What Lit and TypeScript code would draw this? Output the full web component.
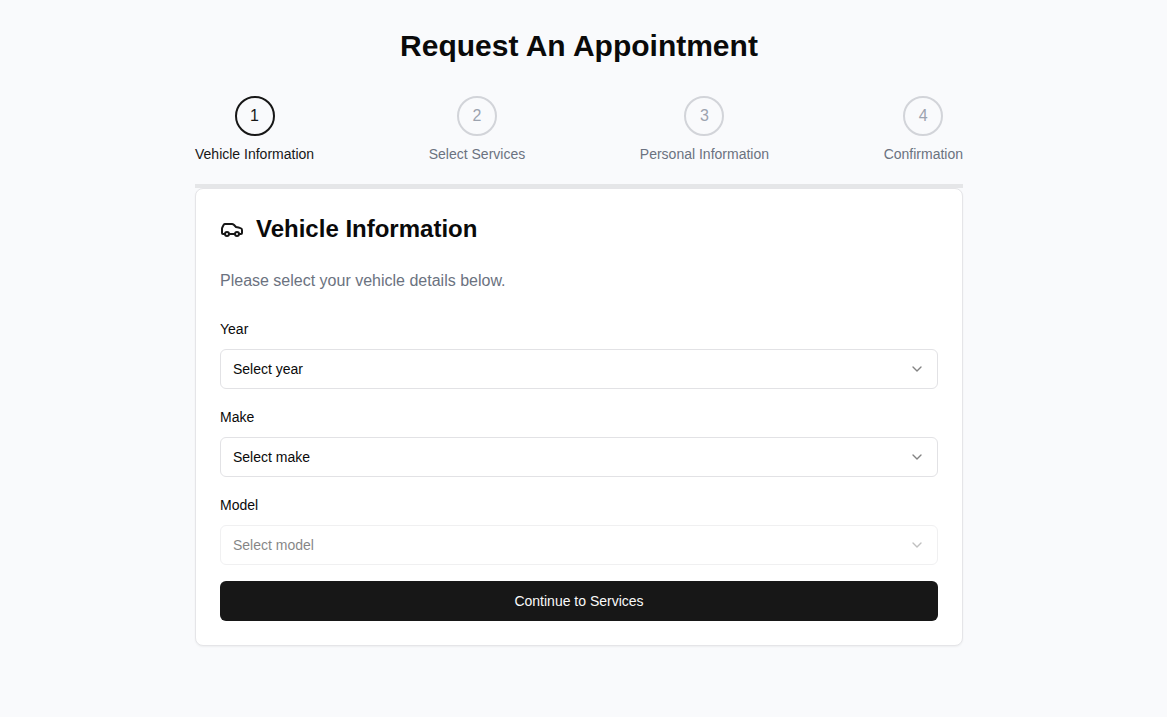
import { LitElement, html, css, svg } from "lit";
import { customElement, property, state } from "lit/decorators.js";
import { classMap } from "lit/directives/class-map.js";

const carIcon = html`<svg class="car" viewBox="0 0 24 24" aria-hidden="true">${svg`
  <path d="M19 17h2c.6 0 1-.4 1-1v-3c0-.9-.7-1.7-1.5-1.9C18.7 10.6 16 10 16 10s-1.3-1.4-2.2-2.3c-.5-.4-1.1-.7-1.8-.7H5c-.6 0-1.1.4-1.4.9l-1.4 2.9A3.7 3.7 0 0 0 2 12v4c0 .6.4 1 1 1h2"/>
  <circle cx="7" cy="17" r="2"/>
  <path d="M9 17h6"/>
  <circle cx="17" cy="17" r="2"/>`}</svg>`;

@customElement("select-field")
export class SelectField extends LitElement {
  @property() label = "";
  @property() placeholder = "";
  @property({ type: Array }) options: string[] = [];
  @property({ type: Boolean }) disabled = false;

  static styles = css`
    :host { display: block; }
    label {
      display: block;
      margin-bottom: 8px;
      font-size: 14px;
      line-height: 24px;
    }
    .control { display: grid; align-items: center; }
    .control > * { grid-area: 1 / 1; }
    .disabled { opacity: 0.5; }
    select {
      appearance: none;
      width: 100%;
      height: 40px;
      margin: 0;
      padding: 0 40px 0 12px;
      border: 1px solid #e2e2e5;
      border-radius: 6px;
      background: #fff;
      color: #0a0a0a;
      font: inherit;
      font-size: 14px;
      line-height: 20px;
      opacity: 1;
    }
    .chevron {
      justify-self: end;
      width: 16px;
      height: 16px;
      margin-right: 13px;
      fill: none;
      stroke: currentColor;
      stroke-width: 2;
      stroke-linecap: round;
      stroke-linejoin: round;
      opacity: 0.5;
      pointer-events: none;
    }
  `;

  render() {
    return html`
      <label for="field">${this.label}</label>
      <div class=${classMap({ control: true, disabled: this.disabled })}>
        <select id="field" ?disabled=${this.disabled}>
          <option value="">${this.placeholder}</option>
          ${this.options.map((o) => html`<option>${o}</option>`)}
        </select>
        <svg class="chevron" viewBox="0 0 24 24" aria-hidden="true"><path d="m6 9 6 6 6-6" /></svg>
      </div>
    `;
  }
}

@customElement("app-root")
export class AppRoot extends LitElement {
  @state() private current = 0;

  private steps = ["Vehicle Information", "Select Services", "Personal Information", "Confirmation"];

  static styles = css`
    :host {
      display: block;
      box-sizing: border-box;
      min-height: 100vh;
      padding: 28px 9px 28px 0;
      background: #f9fafb;
      background: #f9fafc;
      color: #0a0a0a;
      font-family: "Liberation Sans", Arial, sans-serif;
      font-size: 16px;
      line-height: 24px;
    }
    main { max-width: 768px; margin: 0 auto; }
    h1, h2, p, ol { margin: 0; padding: 0; }
    h1 {
      margin-bottom: 32px;
      font-size: 30px;
      line-height: 36px;
      text-align: center;
    }
    .steps {
      display: flex;
      justify-content: space-between;
      padding-bottom: 20px;
      border-bottom: 4px solid #e5e7eb;
      border-bottom-color: #e5e6e8;
      list-style: none;
    }
    .step {
      display: flex;
      flex-direction: column;
      align-items: center;
      gap: 8px;
      color: #6b7280;
      font-size: 14px;
      line-height: 20px;
    }
    .circle {
      display: flex;
      align-items: center;
      justify-content: center;
      box-sizing: border-box;
      width: 40px;
      height: 40px;
      border: 2px solid #d1d5db;
      border-color: #d2d4d9;
      border-radius: 50%;
      color: #9ca3af;
      font-size: 16px;
    }
    .active { color: #171717; }
    .active .circle { border-color: #171717; color: #171717; }
    .card {
      display: flex;
      flex-direction: column;
      gap: 24px;
      padding: 24px;
      border: 1px solid #e5e5e8;
      border-radius: 8px;
      background: #fff;
      box-shadow: 0 1px 2px rgba(0, 0, 0, 0.05);
    }
    .heading { display: flex; align-items: center; gap: 12px; }
    h2 { font-size: 24px; line-height: 32px; }
    .car {
      width: 24px;
      height: 24px;
      fill: none;
      stroke: #171717;
      stroke-width: 2;
      stroke-linecap: round;
      stroke-linejoin: round;
    }
    .intro { color: #6b7280; }
    form { display: flex; flex-direction: column; gap: 16px; }
    button {
      height: 40px;
      border: 0;
      border-radius: 6px;
      background: #171717;
      color: #fafafa;
      font: inherit;
      font-size: 14px;
      line-height: 20px;
      cursor: pointer;
    }
  `;

  render() {
    return html`
      <main>
        <h1>Request An Appointment</h1>
        <ol class="steps">
          ${this.steps.map(
            (name, i) => html`
              <li class=${classMap({ step: true, active: i === this.current })}>
                <span class="circle">${i + 1}</span>
                <span>${name}</span>
              </li>
            `
          )}
        </ol>
        <section class="card">
          <div class="heading">${carIcon}<h2>Vehicle Information</h2></div>
          <p class="intro">Please select your vehicle details below.</p>
          <form @submit=${(e: Event) => e.preventDefault()}>
            <select-field label="Year" placeholder="Select year" .options=${["2025", "2024", "2023"]}></select-field>
            <select-field label="Make" placeholder="Select make" .options=${["Ford", "Honda", "Toyota"]}></select-field>
            <select-field label="Model" placeholder="Select model" disabled></select-field>
            <button type="submit">Continue to Services</button>
          </form>
        </section>
      </main>
    `;
  }
}
